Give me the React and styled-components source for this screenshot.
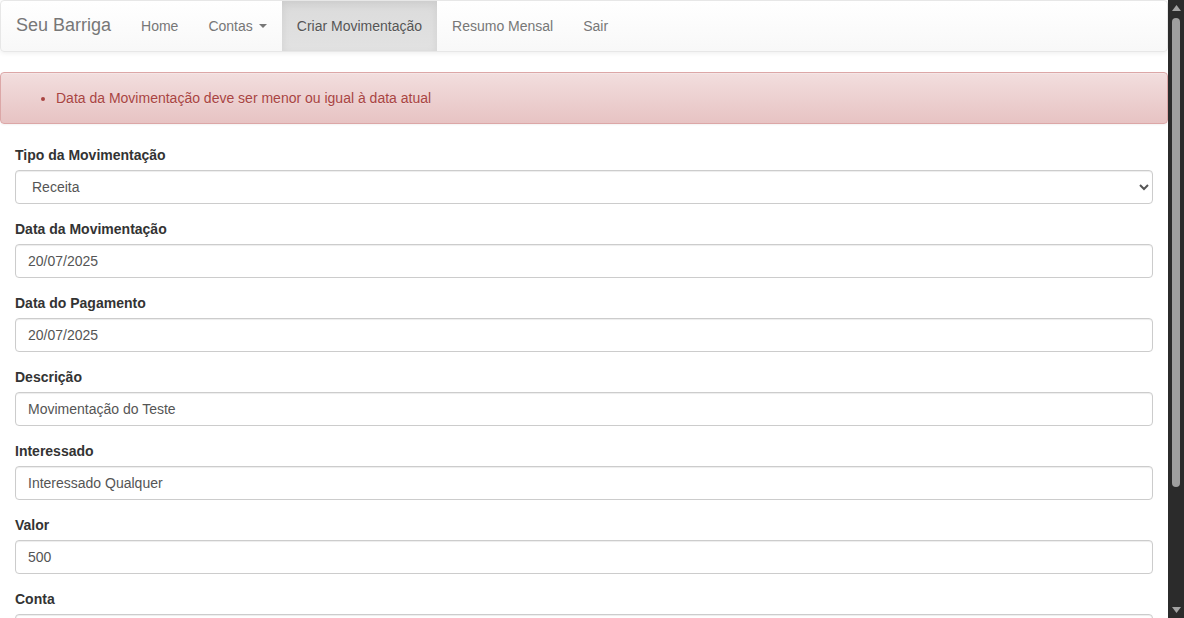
import React from 'react';
import styled, { createGlobalStyle } from 'styled-components';

const GlobalStyle = createGlobalStyle`
  html, body {
    margin: 0;
    padding: 0;
    background: #fff;
    overflow: hidden;
  }
  body {
    font-family: "Liberation Sans", Arial, Helvetica, sans-serif;
    font-size: 14px;
    line-height: 1.42857143;
    color: #333;
  }
  * { box-sizing: border-box; }
`;

const Shell = styled.div`
  display: flex;
  height: 100vh;
`;

const Page = styled.div`
  flex: 1;
  min-width: 0;
  overflow: hidden;
`;

// window scrollbar drawn as its own column
const ScrollBar = styled.div`
  width: 16px;
  flex-shrink: 0;
  display: flex;
  flex-direction: column;
  align-items: center;
  background: #2b2b2b;
`;

const Arrow = styled.div`
  height: 16px;
  display: flex;
  align-items: center;
  justify-content: center;
`;

const Track = styled.div`
  flex: 1;
  width: 100%;
  display: flex;
  justify-content: center;
`;

const Thumb = styled.div`
  width: 8px;
  margin-top: 2px;
  height: 469px;
  border-radius: 4px;
  background: #9f9f9f;
`;

const Navbar = styled.nav`
  display: flex;
  align-items: stretch;
  min-height: 52px;
  border: 1px solid #e7e7e7;
  border-radius: 4px;
  background-image: linear-gradient(to bottom, #fff 0, #f8f8f8 100%);
  box-shadow: inset 0 1px 0 rgba(255, 255, 255, 0.15), 0 1px 5px rgba(0, 0, 0, 0.075);
  margin-bottom: 20px;
`;

const Brand = styled.a`
  display: flex;
  align-items: center;
  padding: 0 15px;
  font-size: 18px;
  color: #777;
  text-decoration: none;
  text-shadow: 0 1px 0 rgba(255, 255, 255, 0.25);
`;

const NavList = styled.ul`
  display: flex;
  list-style: none;
  margin: 0;
  padding: 0;
`;

const NavLink = styled.a`
  display: flex;
  align-items: center;
  height: 50px;
  padding: 0 15px;
  color: ${(p) => (p.$active ? '#555' : '#777')};
  text-decoration: none;
  text-shadow: 0 1px 0 rgba(255, 255, 255, 0.25);
  background-image: ${(p) =>
    p.$active ? 'linear-gradient(to bottom, #dbdbdb 0, #e2e2e2 100%)' : 'none'};
  box-shadow: ${(p) => (p.$active ? 'inset 0 3px 9px rgba(0, 0, 0, 0.075)' : 'none')};
`;

const Caret = styled.span`
  display: inline-block;
  width: 0;
  height: 0;
  margin-left: 6px;
  border-top: 4px solid #777;
  border-left: 4px solid transparent;
  border-right: 4px solid transparent;
`;

const Alert = styled.div`
  padding: 15px;
  margin-bottom: 21px;
  border: 1px solid #dca7a7;
  border-radius: 4px;
  color: #a94442;
  background-image: linear-gradient(to bottom, #f2dede 0, #e7c3c3 100%);
  text-shadow: 0 1px 0 rgba(255, 255, 255, 0.2);
  box-shadow: inset 0 1px 0 rgba(255, 255, 255, 0.25), 0 1px 2px rgba(0, 0, 0, 0.05);

  ul {
    margin: 0;
    padding-left: 40px;
  }
`;

const Form = styled.form`
  padding: 0 15px 20px;
`;

const FormGroup = styled.div`
  margin-bottom: 15px;
`;

const Label = styled.label`
  display: inline-block;
  max-width: 100%;
  margin-bottom: 5px;
  font-weight: bold;
  color: #333;
`;

const Control = styled.input`
  display: block;
  width: 100%;
  height: 34px;
  padding: 6px 12px;
  font-family: inherit;
  font-size: 14px;
  line-height: 1.42857143;
  color: #555;
  background-color: #fff;
  border: 1px solid #ccc;
  border-radius: 4px;
  box-shadow: inset 0 1px 1px rgba(0, 0, 0, 0.075);
  outline: none;
`;

const Select = styled(Control).attrs({ as: 'select' })``;

const RadioRow = styled.div`
  display: flex;
  gap: 20px;
  padding-top: 7px;

  label {
    display: flex;
    align-items: center;
    gap: 4px;
    font-weight: normal;
  }
`;

const Button = styled.button`
  padding: 6px 12px;
  font-family: inherit;
  font-size: 14px;
  line-height: 1.42857143;
  color: #fff;
  border: 1px solid #2e6da4;
  border-radius: 4px;
  background-image: linear-gradient(to bottom, #337ab7 0, #265a88 100%);
`;

const fields = [
  { label: 'Data da Movimentação', value: '20/07/2025' },
  { label: 'Data do Pagamento', value: '20/07/2025' },
  { label: 'Descrição', value: 'Movimentação do Teste' },
  { label: 'Interessado', value: 'Interessado Qualquer' },
  { label: 'Valor', value: '500' },
];

export default function App() {
  return (
    <Shell>
      <GlobalStyle />
      <Page>
        <Navbar>
          <Brand href="#">Seu Barriga</Brand>
          <NavList>
            <li><NavLink href="#">Home</NavLink></li>
            <li><NavLink href="#">Contas<Caret /></NavLink></li>
            <li><NavLink href="#" $active>Criar Movimentação</NavLink></li>
            <li><NavLink href="#">Resumo Mensal</NavLink></li>
            <li><NavLink href="#">Sair</NavLink></li>
          </NavList>
        </Navbar>

        <Alert>
          <ul>
            <li>Data da Movimentação deve ser menor ou igual à data atual</li>
          </ul>
        </Alert>

        <Form onSubmit={(e) => e.preventDefault()}>
          <FormGroup>
            <Label>Tipo da Movimentação</Label>
            <Select defaultValue="REC">
              <option value="REC">Receita</option>
              <option value="DESP">Despesa</option>
            </Select>
          </FormGroup>

          {fields.map((f) => (
            <FormGroup key={f.label}>
              <Label>{f.label}</Label>
              <Control type="text" defaultValue={f.value} />
            </FormGroup>
          ))}

          <FormGroup>
            <Label>Conta</Label>
            <Select defaultValue="1">
              <option value="1">Conta do Teste</option>
            </Select>
          </FormGroup>

          <FormGroup>
            <Label>Situação</Label>
            <RadioRow>
              <label><input type="radio" name="status" defaultChecked /> Pago</label>
              <label><input type="radio" name="status" /> Pendente</label>
            </RadioRow>
          </FormGroup>

          <Button type="submit">Salvar</Button>
        </Form>
      </Page>

      <ScrollBar>
        <Arrow>
          <svg width="9" height="6" viewBox="0 0 9 6"><polygon points="0,6 9,6 4.5,0" fill="#a3a3a3" /></svg>
        </Arrow>
        <Track>
          <Thumb />
        </Track>
        <Arrow>
          <svg width="9" height="6" viewBox="0 0 9 6"><polygon points="0,0 9,0 4.5,6" fill="#a3a3a3" /></svg>
        </Arrow>
      </ScrollBar>
    </Shell>
  );
}
